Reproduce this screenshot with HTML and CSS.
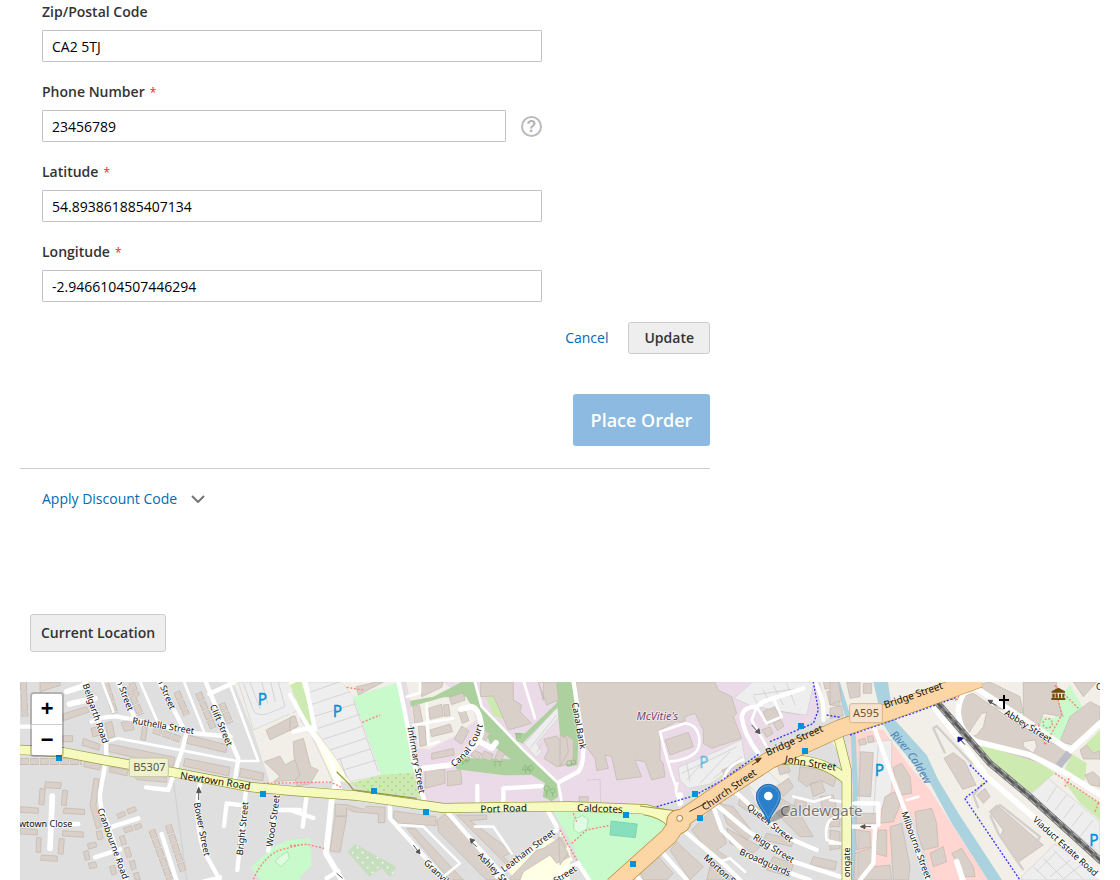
FILE: index.html
```html
<!DOCTYPE html>
<html lang="en">
<head>
<meta charset="utf-8">
<title>Checkout</title>
<link rel="stylesheet" href="styles.css">
</head>
<body>
<main class="page">
  <section class="checkout">
    <form class="address">
      <div class="fields">
        <div class="field">
          <label for="zip">Zip/Postal Code</label>
          <input id="zip" type="text" value="CA2 5TJ">
        </div>
        <div class="field">
          <label for="phone">Phone Number<span class="req">*</span></label>
          <div class="with-help">
            <input id="phone" type="text" value="23456789">
            <button class="help" type="button" aria-label="Phone help">?</button>
          </div>
        </div>
        <div class="field">
          <label for="lat">Latitude<span class="req">*</span></label>
          <input id="lat" type="text" value="54.893861885407134">
        </div>
        <div class="field">
          <label for="lng">Longitude<span class="req">*</span></label>
          <input id="lng" type="text" value="-2.9466104507446294">
        </div>
      </div>
      <div class="actions">
        <a href="#cancel" class="link">Cancel</a>
        <button type="button" class="btn update">Update</button>
      </div>
    </form>
    <div class="order"><button type="button" class="place" disabled>Place Order</button></div>
    <div class="discount">
      <a href="#discount" class="link">Apply Discount Code</a>
      <svg class="chevron" viewBox="0 0 14 8" aria-hidden="true"><path d="M1 1l6 6 6-6"/></svg>
    </div>
  </section>
  <button type="button" class="btn locate">Current Location</button>
  <section class="map" aria-label="Map">
    <svg class="tiles" viewBox="0 6 3240 594" preserveAspectRatio="xMinYMin slice">
      <defs>
        <pattern id="dots" width="24" height="24" patternUnits="userSpaceOnUse"><circle cx="6" cy="6" r="2" fill="#8fb573"/><circle cx="18" cy="18" r="2" fill="#8fb573"/></pattern>
        <pattern id="crosses" width="30" height="30" patternUnits="userSpaceOnUse"><path d="M8 5v6M5 8h6M23 20v6M20 23h6" stroke="#fff" stroke-width="2"/></pattern>
      </defs>
      <rect y="0" width="3240" height="620" fill="#dfdfdf"/>

      <!-- Land use -->
      <g>
        <path class="sand" d="M640 6H840V310H750L700 155z"/>
        <path class="parking" d="M655 6H812L832 92 700 150z"/>
        <path class="park" d="M840 476L800 482 760 500 693 562 722 600H840z"/>
        <path class="pitch" d="M765 545l18-18 20-12 5 20-25 25z"/>
      </g>
      <g transform="translate(810)">
        <path class="school" d="M-5 6H190L200 50 280 290 190 310 130 300 60 150z"/>
        <path class="sand" d="M0 90L55 150 120 290 125 308 0 310z"/>
        <path class="grass" d="M0 15L18 6H35L75 140 60 148 45 120z"/>
        <path class="parking" d="M48 6H155L190 48 276 285 180 305 142 240 75 150z"/>
        <path class="sand" d="M160 6H330L190 50z"/>
        <path class="park" d="M190 50L330 6 385 278 275 285z"/>
        <path class="grass" d="M182 308L275 285 370 278 388 352 215 330z"/>
        <path fill="url(#dots)" d="M182 308L275 285 370 278 388 352 215 330z"/>
        <path class="industry" d="M345 6H850V370H470L405 365 380 200 355 90z"/>
        <path class="sand" d="M350 6H460L500 40 530 40 560 120 490 170 420 207 385 205z"/>
        <path class="wood" d="M515 6H552L572 80 700 205 740 245 800 305 805 350 785 364 758 350 765 310 725 285 640 286 500 268 485 240 540 235 662 238 600 190 570 120 528 50 460 52 362 80 360 62 430 50z"/>
        <path class="wood" d="M810 6H850V260H840L825 150 805 90 700 192 678 182 676 160 705 160 800 70z"/>
        <path class="grass" d="M588 50L620 45 650 120 610 108z"/>
        <path class="parking" d="M700 188L805 80 808 110 740 190 755 215 740 232z"/>
        <path class="park" d="M0 482L60 475 65 558 20 600H0z"/>
        <path fill="#c8dfbf" d="M195 492L320 560 300 592 275 565 238 590 172 515z"/>
        <path fill="url(#crosses)" d="M195 492L320 560 300 592 275 565 238 590 172 515z"/>
        <path class="school" d="M775 470L840 500V600H680L640 560z"/>
      </g>
      <g transform="translate(1620)">
        <path class="industry" d="M0 6H775V110L620 190 400 330 290 382 0 372z"/>
        <path class="wood" d="M-15 6H38L55 180 52 255 20 260 25 200 0 165z"/>
        <path class="park" d="M-20 392L290 400 328 435 300 480 160 600H80L35 490z"/>
        <path class="school" d="M0 450L38 540 0 570z"/>
        <path class="parking" d="M522 55L578 6H762L740 105 700 100 590 85z"/>
        <path class="parking" d="M355 262L480 210 545 178 555 238 450 312 385 325 360 300z"/>
        <path class="sand" d="M782 6H850V105L800 118zM560 300L640 240 690 290 590 370z"/>
        <path class="parking" d="M560 310L620 270 660 310 600 350z"/>
        <path class="pitch" d="M42 420l25-14 18 12-5 30-25 12-14-12z"/>
        <path fill="#88dfbe" stroke="#71c9a6" stroke-width="2" d="M153 423L232 432 226 473 150 465z"/>
      </g>
      <g transform="translate(2430)">
        <path class="sand" d="M62 6H810V600H70V160L50 130 10 6z"/>
        <path class="sand" d="M0 6H140V150H60z"/>
        <path class="school" d="M0 170L25 165 35 240z"/>
        <path class="retail" d="M55 160L158 148 240 260 300 330 370 440 475 600H75z"/>
        <path class="grass" d="M425 185L500 208 640 255 675 280 600 342 520 298z"/>
        <path class="grass" d="M700 300L810 370V420L750 370zM795 440l15-12v30zM750 210L810 150V240L770 215z"/>
        <path class="grass" d="M700 275L725 222 770 250 765 300 740 305z"/>
        <path class="park" d="M690 55L720 15 760 85 690 195 615 160 640 110 675 115z"/>
        <path class="parking" d="M655 295L810 425V520L600 345zM575 590L675 492 810 580V600H575zM90 190L185 180V330L130 430H75z"/>
        <path fill="#dfdfdf" d="M205 425L245 400 310 600H170z"/>
        <path class="water" d="M130 6H174L190 115 290 225 325 300 385 400 516 600H474L365 430 300 310 190 180 158 130z"/>
        <path fill="none" stroke="#aad3df" stroke-width="15" d="M20 0L45 80 70 170 76 330 68 600"/>
      </g>

      <!-- Buildings -->
      <g class="houses-edge"><use href="#rows"/></g>
      <g class="houses"><path id="rows" d="M258 12L285 100M325 20L362 105M335 8L350 50M470 35L500 105M535 38L580 145M605 70L630 130M400 150L480 178M0 245H185M395 450L450 600M445 435L490 575M10 8L15 110"/></g>
      <g class="bld">
        <path d="M128 102L200 80 208 96 130 122zM60 6h60v10l-60 20zM213 145l20-5 6 25-20 6zM255 130l20-6 10 45-20 6zM303 128l30-8 10 28-30 6zM368 138l14 4-6 40-14-4zM505 165L622 195 618 218 500 190zM270 192L465 232 460 258 265 215zM495 235L630 262 626 288 490 258zM662 265L732 280 728 303 658 290zM190 175l50 18-4 18-50-15zM128 167h30v18h-30zM195 240l48 12-4 18-48-10zM270 260l55 10-4 18-52-12zM335 275l105 18v14l-90-8z"/>
        <path d="M76 305l48 3-2 18-48-3zM60 325l16 2-4 48-16-2zM128 330l15 2-4 45-15-2zM0 380l55 4v16l-55-3zM132 384l62 4v16l-64-4zM0 444l52 5v16l-52-3zM128 452l62 4v16l-62-4zM50 472l14 2-2 44-14-2zM118 475l15 2-4 46-15-2zM64 525l48 3v16l-50-3zM222 295l16 2-10 80 18 62-16 8-20-70zM228 455l16-3 6 24-16 4z"/>
        <path d="M290 402l22-8 5 12-22 10zM320 388l24-8 6 12-24 10zM310 445l24-8 6 14-24 8zM342 436l20-6 4 12-20 8zM298 470l14-4 8 25-15 5zM202 492l25-6 4 14-25 8zM190 515l14-4 6 26-14 4zM205 550l22-4 4 16-22 4zM268 560l16-4 6 24-14 6zM312 505l15-4 8 28-14 5zM328 545l15-4 6 24-14 6zM340 580l15-3 6 23h-15z"/>
        <path d="M738 150L820 108 832 140 750 180zM733 245L780 228 795 255 840 230V300L760 305 780 290z"/>
      </g>
      <g class="bld" transform="translate(810)">
        <path d="M10 185L40 175 62 260 85 270 60 312 20 318 15 300 30 285 12 230zM0 112l15-5 10 30-25 16zM135 372L170 374 222 388 230 378 285 382V428H265V402L190 395 170 385 170 408 135 408zM135 410h35L150 517 120 513zM312 393L438 410V437L330 430 310 415zM442 420L465 402 660 600H590L445 455zM500 405H590V418L540 422 668 515 640 530 660 550 650 555zM350 445L375 445 520 600H480z"/>
        <path d="M388 6H460L455 22 395 50zM368 80l20-5 10 50-24 5zM385 138l20 2 5 55-20 5zM415 85l40-12 5 35-40 10zM420 150L480 132 488 155 425 170zM478 52l42-14 5 22-40 14zM505 95l20-5 12 32-20 8zM515 138l22 15-22 40-22-15zM425 220L490 205 493 225 425 238zM460 75l16-2 4 34-16 2zM405 268H465V310L405 325zM472 275l40-5 4 42-44 6zM580 150l20 10-15 25-15-10zM550 210l25 10-10 18-22-10zM582 213l28 10-8 20-28-10zM625 210l20 10-13 25-18-10z"/>
        <path d="M572 6H670V60L695 75 690 95 725 130 655 150 625 80 610 48 572 50zM745 6H800L805 60 770 75zM762 178L800 168 810 182 830 165 850 180V250L800 260 762 235 775 210zM760 6h-15l15 55zM740 510L760 505 815 470 830 500 822 510 840 530 800 550 780 525 700 575 690 600H655zM198 20L260 6H280L205 45z"/>
      </g>
      <g class="bld" transform="translate(1620)">
        <path d="M48 6H465L475 30 515 50 530 100 520 110 545 175 455 205 430 190 430 150 405 100 375 110 375 128 350 125 300 150 300 240 310 250 315 290 275 300 255 245 225 240 245 290 170 300 155 230 135 225 145 265 110 272 105 235 70 190zM315 180L385 157 400 200 330 225zM0 165L20 175 25 215 0 260zM57 350h28v20H57zM610 95L645 80 660 115 625 135zM605 150l25-10 10 20-20 12zM640 130l22-12 10 20-20 14zM485 270L540 250 550 260 500 300zM800 35L840 25V80L810 75zM790 6l20-2 5 20-20 4z"/>
        <path d="M395 450L460 385 500 490 470 510 500 530 480 560zM540 350L600 385 590 410 535 375zM480 370L520 380 580 460 560 480 500 430zM650 320L685 295 700 320 670 350zM655 350L705 380 730 420 760 470 720 470 640 390zM720 260L790 270 830 290 820 320 780 300 740 320 715 300zM750 310L785 305 795 335 760 350zM780 350L820 345 830 390 790 400zM710 350l30 20-10 30-30-20zM620 460L700 480 695 500 610 480zM500 445L600 500 580 520 510 490zM640 530L700 550 690 590 620 570zM450 560L520 590 540 600H440zM330 510L350 485 430 560 390 600zM290 525L340 580 320 600H250L240 575zM760 530L830 545 825 570 750 555zM650 250l30-5 10 30-30 10z"/>
        <path d="M-4 470L25 520 0 555z"/>
      </g>
      <g class="bld" transform="translate(2430)">
        <path d="M0 6H25L35 60 0 75zM50 6H90V50L60 55zM100 10h25v30h-25zM0 85l35-8 5 30-40 8zM70 85L130 70 132 110 75 120zM85 180l20-6 5 18-20 4zM112 170l16-3 4 18-16 4zM92 215L130 218 122 350 84 348zM190 262L215 250 240 290 245 340 210 345 195 300zM165 350L195 335 210 375 190 425 150 430 158 380zM80 400H105L140 400V430H78zM75 450L120 455 122 500 80 510zM145 450H170V530L135 520zM75 520L130 500 135 560 180 555 185 600H72zM180 440L215 430 240 560 235 600H190zM255 395L305 385 320 430 325 500 280 510 262 460zM300 520L340 500 350 545 310 560zM365 520L395 505 430 560 435 590H405zM0 400L30 390V440H0zM0 450l30 5v50L0 510z"/>
        <path d="M342 235L370 218 405 245 438 315 398 328zM440 345L465 325 480 350 460 370zM478 395L500 375 530 400 640 495 562 548 510 470 520 450z"/>
        <path d="M400 50L430 40 560 130 650 180 720 215 680 265 510 210 440 180 400 155 378 110zM440 15L480 6 570 50 580 100 500 85zM580 6H680V50L700 110 640 100 620 160 580 110zM720 110L780 65 810 80V130L730 195 690 185zM750 210l20-15 20 25 20-8v25l-50 0zM765 285l25-10 20 20v25l-30-5zM730 6H800L760 50z"/>
        <path class="pale" d="M455 100L470 97 460 140 440 165 410 175 425 145zM580 185l35-5 5 20-10 20-30-20z"/>
      </g>

      <!-- Parking aisles and fences -->
      <g class="aisle">
        <path d="M670 10L700 90Q710 110 740 102L795 80 775 6M690 6l30 80M725 6l18 65M752 6l14 60"/>
        <path d="M860 40l100-35M870 75l120-40M880 110l125-38M895 145l125-42M910 178l120-40M930 210l110-36M950 240l100-33M970 270l100-30M960 235l20 60M1000 60l75 215"/>
        <path d="M1985 280L2100 225 2150 200M2000 300L2060 235M2040 310L2130 215M2080 295L2165 230M2000 250l10 55M2200 50l15 25M2230 30l20 40M2260 15l30 60M2300 10l25 65M2200 45l140-20M2210 80l130 25M1700 300l40-2 2 68"/>
        <path d="M3110 320l-30 45M3140 345l-35 45M3165 370l-35 45M3190 395l-35 45M3220 420l-40 50M3040 560l40 38M3070 535l60 60M3100 510l90 88M3050 575l60-60M3090 590l60-50M3130 598l60-50M2520 215L2515 590M2575 190L2560 410M1515 190L1605 85M1530 205L1610 105M1550 218L1565 190"/>
        <path d="M460 300L500 600"/>
      </g>

      <!-- Minor roads -->
      <g class="road">
        <path d="M190 0L250 160Q262 190 258 240L240 340Q238 385 262 430L322 610M0 140h45M215 125Q250 108 290 110L340 118 525 160 632 170M290 0L345 115M415 0L498 160M555 0L600 110 655 235 645 300M568 42L640 8M498 165L485 215 445 330 378 322M540 310Q520 400 550 510L605 610M550 605L600 592M678 330L652 570M612 438L620 370 660 375M773 345L745 512M780 390h60M100 432h75M270 442L355 415M225 532L300 508M425 462L472 610"/>
        <path class="wide" d="M97 348L90 505M140 35L200 15M148 72L225 55"/>
        <path class="thin" d="M245 0L280 95M358 0L410 120M490 0L552 155M262 185L295 175 470 208 650 243 715 243 625 0"/>
      </g>
      <g class="road" transform="translate(810)">
        <path d="M325 0L355 150 370 240 398 345 405 370M562 318V375M640 370V325L755 318M0 45L60 150 120 235 150 325M45 0L75 150M10 155L65 142M50 345L38 440M0 390L70 414M300 375V415L430 560 478 610M475 400L655 605M775 395L800 440M800 450L620 590M110 595l35-22"/>
        <path class="wide" d="M400 265L480 255Q570 200 575 150Q570 80 540 80L512 88M560 180L605 205 618 188M145 280L125 360 108 520 158 605"/>
        <path class="thin" d="M553 0L575 80 700 210 805 310 815 365M805 308L845 285M370 135L490 115M410 70L415 195 445 185M330 435L400 440 510 550 460 590M555 440H610L665 520M700 0l35 115M350 50l40-12V6"/>
      </g>
      <g class="road" transform="translate(1620)">
        <path d="M40 0L68 180Q75 250 55 275L0 305M460 380L485 450 580 540 750 600M470 375L560 450 700 545 840 590M525 335L620 420 700 480 770 510M375 455L500 560 545 605M0 575L55 550 90 605M305 515L385 605M225 585l20 20M760 0Q795 50 790 120M595 220Q550 160 545 110Q550 80 590 80L610 65 730 25"/>
        <path class="thin" d="M350 325Q325 260 300 155L375 130Q420 135 418 190Q415 235 330 245M352 310Q340 340 365 370M590 80L575 120 620 200M590 80L620 130 665 110 640 55M490 300Q500 255 550 240M700 350L760 365 810 350M840 410Q790 410 800 480L840 490M480 545L510 535 555 575"/>
        <path class="wide" d="M360 345v25"/>
      </g>
      <g class="road" transform="translate(2430)">
        <path d="M130 135L190 300 228 400 295 610M65 440H135L130 550 90 600M75 370H145V435"/>
        <path class="wide" d="M300 65L430 235 470 290 620 420 810 590M430 15Q385 40 385 100Q390 160 440 185L600 225 700 275 820 350M425 15L600 130 720 212 815 125M380 545L400 605"/>
        <path class="thin" d="M70 370L0 360M0 490H35M230 360l35-10"/>
      </g>
      <path fill="none" stroke="#d2cfca" stroke-width="7" d="M2775 220L2740 145 2750 138 2855 250 2850 260M2890 310L2860 345 2875 385M2915 400L2940 375 3060 470 3050 485M2910 405L2935 460 3010 570"/>

      <!-- Paths -->
      <g class="foot">
        <path d="M700 598Q730 530 780 510L840 495M730 310L930 306 965 322M980 22L1030 30M1027 127L1080 105M810 497L860 493 912 505M1620 450L1670 540M1660 400L1670 425M1655 490L1700 450 1770 436M3105 280L3240 370M3135 320l15-30M3175 85l-70-70 20 90-50 90-20-60-35 0M3225 395l12-30"/>
        <path d="M2090 366L2180 311 2350 206 2420 190 2460 165M2800 35l15 30"/>
        <circle cx="3083" cy="130" r="14"/><circle cx="2804" cy="48" r="12"/>
      </g>
      <g class="cycle"><path d="M1910 380L2020 348 2100 305 2220 220M2250 185L2380 130 2395 90 2380 6M2420 105L2460 112M2490 165L2700 92 2810 52M2850 255L2900 305 2834 355 3000 600"/></g>

      <!-- Railway -->
      <path fill="none" stroke="#777" stroke-width="20" d="M2745 60L2910 250 3030 350 3245 545"/>
      <path fill="none" stroke="#eee" stroke-width="2" stroke-dasharray="22 10" d="M2750 56L2915 246 3035 346 3250 541M2740 64L2905 254 3025 354 3240 549"/>
      <path fill="none" stroke="#555" stroke-width="6" stroke-dasharray="30 15" d="M2745 60L2910 250 3030 350 3245 545"/>
      <path stroke="#bcbcc8" stroke-width="22" d="M3148 218l-32 40"/>

      <!-- Classified roads -->
      <g class="secondary-edge"><use href="#sec"/></g>
      <g class="secondary"><g id="sec"><path d="M-10 209L130 217 250 240 450 275 690 321 810 332 1010 347 1270 384 1650 379 1880 388 1985 418M2270 240Q2400 228 2480 300M2450 150L2480 270 2480 610"/></g></g>
      <path fill="#f7fabf" stroke="#979c3a" stroke-width="3" d="M1870 404Q1920 412 1945 440L1985 395 1860 378"/>
      <path fill="none" stroke="#979c3a" stroke-width="4" d="M950 275L985 310 1000 330 1190 355"/>
      <path class="primary-edge" d="M1780 618L1945 470 1980 420 2100 338 2250 240 2460 145 2600 98 2880 -4"/>
      <circle cx="1976" cy="425" r="36" fill="#fcd6a4" stroke="#bb8a3c" stroke-width="3"/>
      <path class="primary" d="M1780 618L1945 470 1980 420 2100 338 2250 240 2460 145 2600 98 2880 -4"/>
      <circle cx="1979" cy="415" r="9" fill="#f7f4ee" stroke="#b08030" stroke-width="3"/>

      <!-- One-way arrows -->
      <g class="arrow">
        <path d="M536 360V325M530 338l6-16 7 16zM1180 495l16 22M1188 516l12 5-2-13zM1370 500l-18-16M1364 480l-14-4 4 14zM950 580l18 15M2195 135l18 20M2206 156l14 5-3-15zM2553 440h-30M2535 434l-14 6 14 6zM2930 77l-22-12M2918 61l-14 0 8 11z"/>
        <path stroke="#5d4010" fill="#5d4010" d="M2008 395l50-26M2196 255l18-12M2206 238l18-4-11 14z"/>
        <path stroke="#101080" fill="#101080" d="M2835 194l-15-16M2814 186v-15l16 4z"/>
      </g>

      <!-- Bus stops -->
      <path fill="#0092da" d="M108 225h18v18h-18zM720 333h18v18h-18zM1053 324h18v18h-18zM1209 387h18v18h-18zM1809 396h18v18h-18zM1830 543h18v18h-18zM2016 333h18v18h-18zM2031 405h18v18h-18zM2334 129h18v18h-18zM2346 204h18v18h-18z"/>

      <!-- Trees -->
      <g fill="none" stroke="#7fb070" stroke-width="2"><path d="M1328 255v-15M1322 235h12v10h-12zM1340 250v-14M1335 232h12v10h-12zM1425 260v-12M1420 245h12M1440 260v-12M1434 245h12M1490 175v-12M1500 175v-12M1484 161h22M1517 280v-18M1507 270l9-16 9 16zM1530 280v-20"/><circle cx="1532" cy="264" r="8"/><circle cx="1580" cy="325" r="8"/><circle cx="1598" cy="332" r="7"/><path d="M1580 350v-17M1598 350v-12"/><circle cx="1648" cy="250" r="8"/><circle cx="1660" cy="247" r="7"/></g>

      <!-- Labels -->
      <g class="label">
        <text transform="translate(228 100) rotate(71)">Bellgarth Road</text>
        <text transform="translate(314 40) rotate(69)">th Street</text>
        <text transform="translate(438 36) rotate(66)">th Street</text>
        <text transform="translate(605 135) rotate(67)">Clift Street</text>
        <text transform="translate(430 136) rotate(10)">Ruthella Street</text>
        <text class="big" transform="translate(586 301) rotate(9)">Newtown Road</text>
        <text transform="translate(547 447) rotate(79)">Bower Street</text>
        <text transform="translate(666 445) rotate(-84)">Bright Street</text>
        <text transform="translate(758 422) rotate(-82)">Wood Street</text>
        <text transform="translate(280 490) rotate(70)">Cranbourne Road</text>
        <text class="end" transform="translate(157 429)">Newtown Close</text>
      </g>
      <g class="label" transform="translate(810)">
        <text transform="translate(380 240) rotate(80)">Infirmary Street</text>
        <path id="court" fill="none" stroke="none" d="M484 252Q546 211 569 126"/>
        <text class="start"><textPath href="#court">Canal Court</textPath></text>
        <text class="big" transform="translate(641 384) rotate(-2)">Port Road</text>
        <text class="start" transform="translate(407 543) rotate(43)">Granville Street</text>
        <text class="start" transform="translate(568 521) rotate(46)">Ashley Street</text>
        <text transform="translate(713 511) rotate(-37)">Leatham Street</text>
        <text transform="translate(824 583) rotate(-33)">Street</text>
      </g>
      <g class="label" transform="translate(1620)">
        <text transform="translate(58 137) rotate(80)">Canal Bank</text>
        <text class="place-name" transform="translate(292 106)">McVitie's</text>
        <text class="big" transform="translate(120 384) rotate(2)">Caldcotes</text>
        <text class="big" transform="translate(506 328) rotate(-35)">Church Street</text>
        <text class="big" transform="translate(702 180) rotate(-24)">Bridge Street</text>
        <text class="big" transform="translate(752 248) rotate(9)">John Street</text>
        <text transform="translate(631 428) rotate(38)">Queen Street</text>
        <text transform="translate(642 504) rotate(32)">Rigg Street</text>
        <text transform="translate(616 546) rotate(24)">Broadguards</text>
        <text class="start" transform="translate(436 528) rotate(42)">Morton Street</text>
        <text class="suburb" transform="translate(784 390)">Caldewgate</text>
      </g>
      <g class="label" transform="translate(2430)">
        <text class="big" transform="translate(249 44) rotate(-19)">Bridge Street</text>
        <path id="river" fill="none" stroke="none" d="M190 156Q250 210 314 338"/>
        <text class="river"><textPath href="#river">River Caldew</textPath></text>
        <text transform="translate(595 137) rotate(32)">Abbey Street</text>
        <text transform="translate(260 495) rotate(70)">Milbourne Street</text>
        <text class="end" transform="translate(48 502) rotate(-90)">ongate</text>
        <text transform="translate(707 498) rotate(42)">Viaduct Estate Road</text>
        <text class="start" transform="translate(798 18)">C</text>
      </g>
      <g class="p"><text x="727" y="76">P</text><text x="952" y="110">P</text><text x="2578" y="289">P</text><text x="3222" y="497">P</text><text x="2052" y="265" opacity=".5">P</text></g>
      <rect x="328" y="234" width="117" height="56" rx="6" fill="#eff1cf" stroke="#c5c998" stroke-width="3"/>
      <text class="shield" x="388" y="274" fill="#55583a">B5307</text>
      <rect x="2489" y="71" width="98" height="57" rx="6" fill="#f7e3cc" stroke="#d9b48a" stroke-width="3"/>
      <text class="shield" x="2538" y="112" fill="#70501f">A595</text>
      <path d="M2952 45v42M2937 60h30" stroke="#000" stroke-width="6"/>
      <path fill="#734a08" d="M3095 34l20-11 20 11v4h-40zM3097 41h7v12h-7zM3107 41h6v12h-6zM3117 41h6v12h-6zM3127 41h6v12h-6zM3094 54h42v6h-42z"/>

      <!-- Marker -->
      <path opacity=".25" d="M2246 430Q2265 385 2310 375Q2320 405 2246 430z"/>
      <path fill="#2a7fc9" stroke="#216aa8" stroke-width="3" d="M2245 429C2235 395 2209 378 2209 349A36 36 0 0 1 2281 349C2281 378 2255 395 2245 429z"/>
      <path fill="none" stroke="#5b9fd6" stroke-width="3" d="M2245 415C2235 390 2213 372 2213 349A32 32 0 0 1 2277 349C2277 372 2255 390 2245 415"/>
      <circle cx="2245" cy="348" r="13" fill="#fff"/>
    </svg>
    <div class="zoom">
      <button type="button" aria-label="Zoom in">+</button>
      <button type="button" aria-label="Zoom out">−</button>
    </div>
  </section>
</main>
</body>
</html>
```
FILE: styles.css
```css
* { box-sizing: border-box; }
body { margin: 0; background: #fff; color: #333; font: 14px/20px "Open Sans", "Noto Sans", sans-serif; }
button, input { font: inherit; color: inherit; }
.page { display: flex; flex-direction: column; min-height: 100vh; padding: 2px 20px 0; }
.checkout { max-width: 690px; }
.fields { display: flex; flex-direction: column; gap: 20px; max-width: 522px; padding-left: 22px; }
.field { display: flex; flex-direction: column; gap: 8px; }
.field label { font-weight: 600; }
.req { margin-left: 5px; color: #e02b27; font-size: 12px; font-weight: 400; line-height: 12px; }
.field input { width: 100%; height: 32px; padding: 0 9px; border: 1px solid #c2c2c2; border-radius: 1px; background: #fff; color: #000; }
.with-help { display: flex; align-items: center; gap: 15px; }
.with-help input { flex: 1; min-width: 0; }
.help { display: flex; align-items: center; justify-content: center; width: 21px; height: 21px; padding: 1px 0 0; border: 2px solid #bbb; border-radius: 50%; background: none; color: #b3b3b3; font: bold 16px/16px "Liberation Sans", sans-serif; }
.link { color: #006bb4; text-decoration: none; }
.actions { display: flex; justify-content: flex-end; align-items: center; gap: 20px; margin-top: 20px; }
.btn { border: 1px solid #ccc; border-radius: 3px; background: #eee; font-weight: 600; }
.update { height: 32px; padding: 0 15px; }
.order { display: flex; justify-content: flex-end; padding: 40px 0 22px; border-bottom: 1px solid #ccc; }
.place { min-width: 137px; height: 52px; padding: 0 17px; border: 0; border-radius: 3px; background: #8cbae0; color: #fff; font-size: 18px; font-weight: 600; }
.discount { display: flex; align-items: center; gap: 14px; padding: 20px 22px 0; }
.chevron { width: 14px; height: 8px; fill: none; stroke: #757575; stroke-width: 2; }
.locate { align-self: flex-start; height: 38px; margin: 105px 0 30px 10px; padding: 0 10px; }

.map { position: relative; flex: 1; min-height: 198px; overflow: hidden; background: #ddd; }
.tiles { position: absolute; inset: 0; display: block; width: 100%; height: 100%; }
.zoom { position: absolute; top: 10px; left: 10px; display: flex; flex-direction: column; border: 2px solid rgba(0, 0, 0, .2); border-radius: 4px; background-clip: padding-box; }
.zoom button { width: 30px; height: 30px; padding: 4px 0 0; border: 0; border-radius: 0 0 2px 2px; background: #fff; color: #000; font: bold 22px/26px "Liberation Mono", monospace; }
.zoom button:first-child { height: 31px; border-bottom: 1px solid #ccc; border-radius: 2px 2px 0 0; }

.sand { fill: #f2efe9; }
.school { fill: #ffffe5; }
.grass { fill: #cdebb0; }
.park { fill: #c8facc; }
.wood { fill: #add19e; }
.industry { fill: #ebdbe8; }
.retail { fill: #ffd6d1; }
.water { fill: #aad3df; }
.parking { fill: #eee; stroke: #d2cece; stroke-width: 2; }
.pitch { fill: #dffce2; stroke: #9fd3a4; stroke-width: 2; }
.bld { fill: #d9d0c9; stroke: #c3b5ab; stroke-width: 2; }
.pale { fill: #f2efe9; }
.houses, .houses-edge { fill: none; stroke: #d9d0c9; stroke-width: 16; stroke-dasharray: 24 6; stroke-dashoffset: -1; }
.houses-edge { stroke: #c3b5ab; stroke-width: 20; stroke-dasharray: 26 4; stroke-dashoffset: 0; }
.aisle { fill: none; stroke: #c9c7c7; stroke-width: 2; }
.road { fill: none; stroke: #fff; stroke-width: 13; stroke-linecap: round; stroke-linejoin: round; }
.road .wide { stroke-width: 17; }
.road .thin { stroke-width: 8; }
.foot { fill: none; stroke: #f88377; stroke-width: 4; stroke-dasharray: 6 5; }
.cycle { fill: none; stroke: #3333ff; stroke-width: 4; stroke-dasharray: 6 5; }
.secondary, .secondary-edge { fill: none; stroke: #f7fabf; stroke-width: 26; stroke-linejoin: round; }
.secondary-edge { stroke: #979c3a; stroke-width: 30; }
.primary, .primary-edge { fill: none; stroke: #fcd6a4; stroke-width: 50; stroke-linejoin: round; }
.primary-edge { stroke: #bb8a3c; stroke-width: 54; }
.arrow { fill: #555; stroke: #555; stroke-width: 3; }
.label text { fill: #111; stroke: #fff; stroke-opacity: .65; stroke-width: 5; stroke-linejoin: round; paint-order: stroke; font: 27px "Noto Sans", sans-serif; text-anchor: middle; dominant-baseline: central; }
.label .big { font-size: 30px; stroke-width: 0; }
.label .start { text-anchor: start; }
.label .end { text-anchor: end; }
.label .place-name { fill: #734a73; font-size: 33px; font-style: italic; }
.label .suburb { fill: #777; font-size: 45px; }
.label .river { fill: #4d80b3; stroke-width: 0; font-size: 33px; font-style: italic; text-anchor: start; }
.shield { font: 33px "Noto Sans", sans-serif; text-anchor: middle; }
.p { fill: #0092da; stroke: #0092da; stroke-width: 1; font: 46px "Noto Sans", sans-serif; text-anchor: middle; }
```
